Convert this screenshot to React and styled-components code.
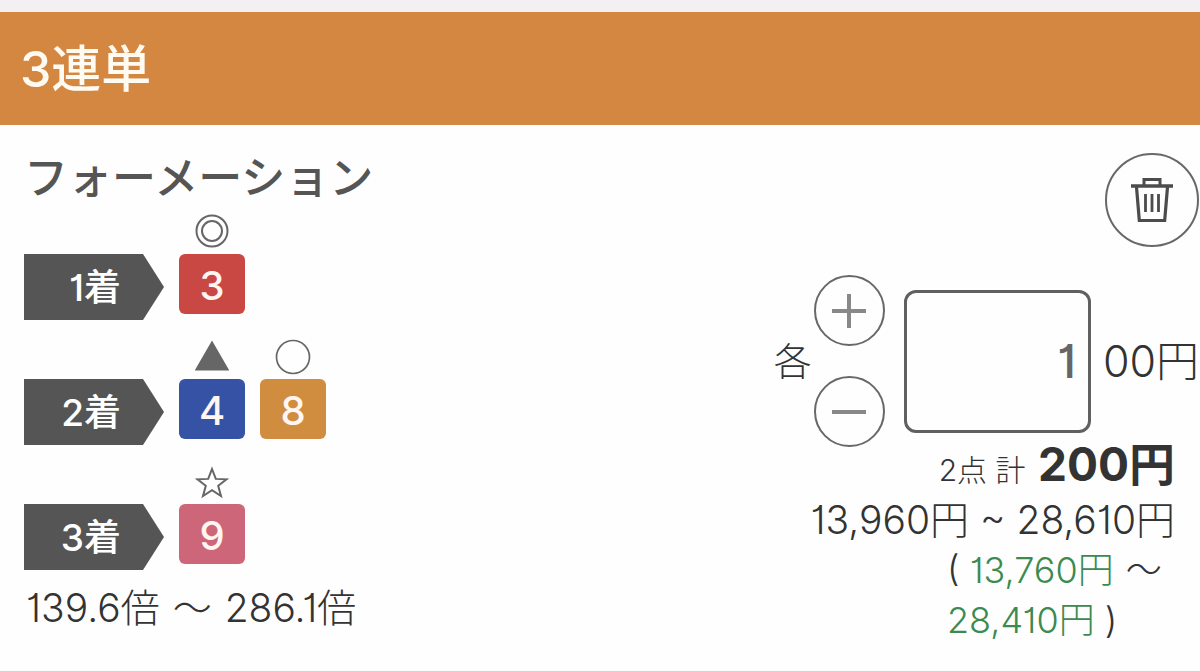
import React, { useState } from "react";
import styled, { createGlobalStyle } from "styled-components";

const GlobalStyle = createGlobalStyle`
  *, *::before, *::after { box-sizing: border-box; }
  body {
    margin: 0;
    background: #fefefe;
    color: #333;
    font-family: Inter, "Noto Sans CJK JP", sans-serif;
    font-weight: 300;
    font-feature-settings: "cv01";
  }
`;

const Ticket = styled.main`
  border-top: 12px solid #f2f0f2;
`;

const BetHeader = styled.header`
  display: flex;
  align-items: center;
  height: 113px;
  padding: 0 20px;
  background: #d38741;
`;

const BetType = styled.h1`
  margin: 0;
  color: #fffaf2;
  font-size: 50px;
  font-weight: 500;
  line-height: 64px;
`;

const Body = styled.div`
  display: flex;
  justify-content: space-between;
  align-items: flex-start;
`;

const Selection = styled.section`
  padding: 25px 0 0 24px;
`;

const Method = styled.h2`
  margin: 0 0 4px;
  color: #555;
  font-size: 44px;
  font-weight: 500;
  line-height: 56px;
`;

const Places = styled.div`
  display: flex;
  flex-direction: column;
  gap: 15px;
`;

const PlaceRow = styled.div`
  display: flex;
  align-items: flex-end;
  gap: 15px;
`;

const PlaceTag = styled.div`
  width: 140px;
  height: 66px;
  padding-right: 43px;
  background: #555;
  clip-path: polygon(0 0, 119px 0, 100% 50%, 119px 100%, 0 100%);
  color: #fff;
  font-size: 37px;
  font-weight: 500;
  line-height: 68px;
  text-align: right;
`;

const Runner = styled.div`
  width: 66px;
  height: 110px;
`;

const MarkIcon = styled.svg`
  display: block;
  width: 36px;
  height: 44px;
  margin: 0 auto;
`;

const RunnerNumber = styled.div`
  height: 60px;
  border-radius: 6px;
  background: ${(p) => p.$color};
  color: #fff6f2;
  font-size: 40px;
  font-weight: 500;
  line-height: 64px;
  text-align: center;
`;

const Odds = styled.p`
  margin: 14px 0 0;
  padding-left: 2px;
  font-size: 39px;
  line-height: 48px;
`;

const Stake = styled.section`
  display: flex;
  flex-direction: column;
  align-items: flex-end;
  padding: 28px 1px 0 0;
`;

const RoundButton = styled.button`
  display: flex;
  align-items: center;
  justify-content: center;
  width: ${(p) => p.$size}px;
  height: ${(p) => p.$size}px;
  padding: 0;
  border: 2px solid #686868;
  border-radius: 50%;
  background: transparent;
  cursor: pointer;
`;

const StakeRow = styled.div`
  display: flex;
  align-items: center;
  margin-top: 28px;
  font-size: 38px;
  line-height: 50px;
`;

const Stepper = styled.div`
  display: flex;
  flex-direction: column;
  gap: 30px;
  margin: 0 19px 0 2px;
`;

const AmountInput = styled.input`
  width: 187px;
  height: 143px;
  margin-right: 12px;
  padding: 0 12px;
  border: 3px solid #606060;
  border-radius: 12px;
  background: transparent;
  color: #666;
  font-family: inherit;
  font-feature-settings: inherit;
  font-size: 46px;
  font-weight: 500;
  text-align: right;
`;

const Unit = styled.span`
  font-size: 43px;
`;

const Summary = styled.div`
  display: flex;
  flex-direction: column;
  align-items: flex-end;
  margin-top: -4px;
  padding-right: 24px;
`;

const Total = styled.p`
  margin: 0;
  font-size: 30px;
  line-height: 42px;
  strong {
    margin-left: 4px;
    font-size: 46px;
    font-weight: 700;
  }
`;

const Payout = styled.p`
  margin: 4px 0 0;
  font-size: 39px;
  line-height: 50px;
`;

const Profit = styled.p`
  width: 228px;
  margin: 0;
  font-size: 36px;
  line-height: 50px;
`;

const Gain = styled.span`
  color: #3b8a50;
`;

const Tilde = styled.span`
  margin: 0 ${(p) => p.$gap}px;
`;

const marks = {
  double: (
    <g fill="none" stroke="#666" strokeWidth="2">
      <circle cx="18" cy="21" r="15.5" />
      <circle cx="18" cy="21" r="10" />
    </g>
  ),
  triangle: <path d="M18 5.500 35.300 35.500H.7Z" fill="#666" />,
  circle: <circle cx="18" cy="22" r="16.500" fill="none" stroke="#666" strokeWidth="1.700" />,
  star: (
    <path
      d="M18 9 21.800 18.900 32.500 19.300 24.200 25.800 27 36 18 30.200 9 36 11.800 25.800 3.500 19.300 14.200 18.900Z"
      fill="none"
      stroke="#666"
      strokeWidth="2"
    />
  ),
};

const places = [
  { label: "1着", runners: [{ number: 3, mark: "double", color: "#c94843" }] },
  {
    label: "2着",
    runners: [
      { number: 4, mark: "triangle", color: "#3552a4" },
      { number: 8, mark: "circle", color: "#d18d3f" },
    ],
  },
  { label: "3着", runners: [{ number: 9, mark: "star", color: "#cd6679" }] },
];

function TrashIcon() {
  return (
    <svg width="42" height="46" viewBox="0 0 42 46" fill="none" stroke="#4c4c4c" aria-hidden="true">
      <path d="M0 9H42" strokeWidth="3.500" />
      <path d="M13 8V2.500H29V8" strokeWidth="3" />
      <path d="M5.500 10 8.300 43.500H33.700L36.500 10" strokeWidth="3.200" />
      <path d="M14.500 17V35M21 17V35M27.500 17V35" strokeWidth="2.800" />
    </svg>
  );
}

function StepIcon({ plus }) {
  return (
    <svg width="36" height="36" viewBox="0 0 36 36" stroke="#888" strokeWidth="4" aria-hidden="true">
      <path d={plus ? "M1 18H35M18 1V35" : "M1 18H35"} />
    </svg>
  );
}

export default function App() {
  const [amount, setAmount] = useState("1");
  const step = (by) => setAmount(String(Math.max(0, Number(amount) + by)));

  return (
    <Ticket lang="ja">
      <GlobalStyle />
      <BetHeader>
        <BetType>3連単</BetType>
      </BetHeader>
      <Body>
        <Selection>
          <Method>フォーメーション</Method>
          <Places>
            {places.map((place) => (
              <PlaceRow key={place.label}>
                <PlaceTag>{place.label}</PlaceTag>
                {place.runners.map((runner) => (
                  <Runner key={runner.number}>
                    <MarkIcon viewBox="0 0 36 44" aria-hidden="true">
                      {marks[runner.mark]}
                    </MarkIcon>
                    <RunnerNumber $color={runner.color}>{runner.number}</RunnerNumber>
                  </Runner>
                ))}
              </PlaceRow>
            ))}
          </Places>
          <Odds>
            139.6倍 <Tilde $gap={2}>〜</Tilde> 286.1倍
          </Odds>
        </Selection>
        <Stake>
          <RoundButton type="button" $size={94} aria-label="削除">
            <TrashIcon />
          </RoundButton>
          <StakeRow>
            <label htmlFor="amount">各</label>
            <Stepper>
              <RoundButton type="button" $size={71} aria-label="増やす" onClick={() => step(1)}>
                <StepIcon plus />
              </RoundButton>
              <RoundButton type="button" $size={71} aria-label="減らす" onClick={() => step(-1)}>
                <StepIcon />
              </RoundButton>
            </Stepper>
            <AmountInput
              id="amount"
              inputMode="numeric"
              value={amount}
              onChange={(e) => setAmount(e.target.value)}
            />
            <Unit>00円</Unit>
          </StakeRow>
          <Summary>
            <Total>
              2点 計 <strong>200円</strong>
            </Total>
            <Payout>13,960円 ~ 28,610円</Payout>
            <Profit>
              ( <Gain>13,760円</Gain> <Tilde $gap={2}>〜</Tilde> <Gain>28,410円</Gain> )
            </Profit>
          </Summary>
        </Stake>
      </Body>
    </Ticket>
  );
}
